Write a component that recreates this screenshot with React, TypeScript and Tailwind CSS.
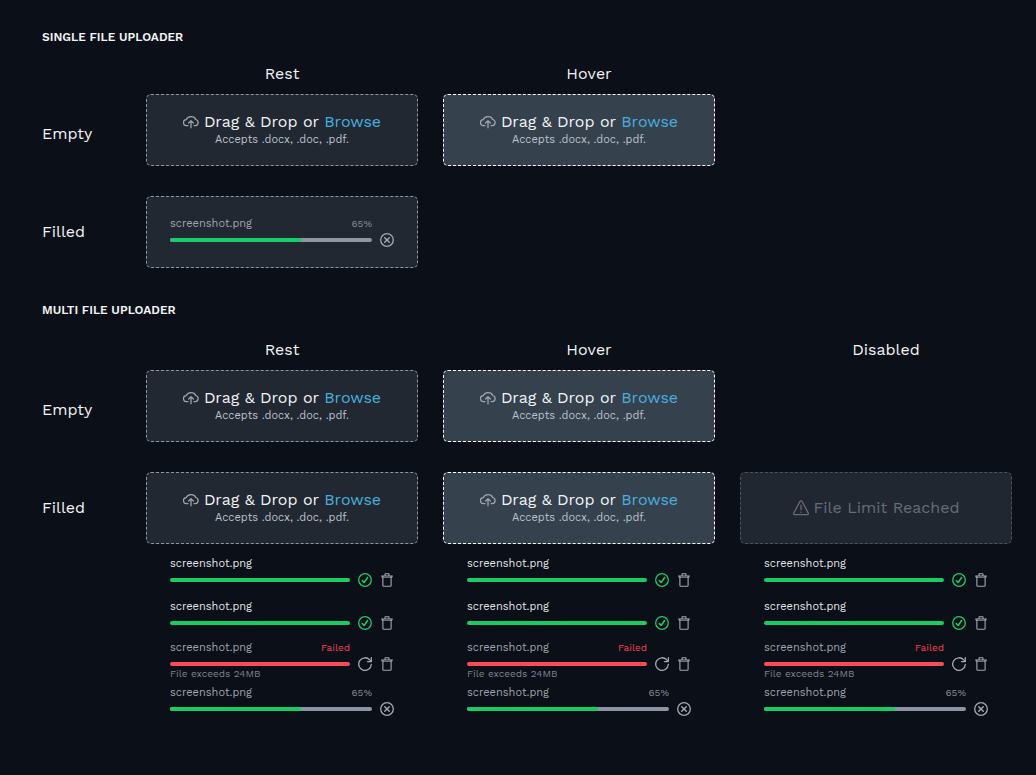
import React from "react";

type IconProps = { className?: string };

function Icon({ className, children }: IconProps & { children: React.ReactNode }) {
  return (
    <svg
      viewBox="0 0 16 16"
      fill="none"
      stroke="currentColor"
      strokeLinecap="round"
      strokeLinejoin="round"
      strokeWidth="1.25"
      aria-hidden="true"
      className={className}
    >
      {children}
    </svg>
  );
}

function CloudIcon() {
  return (
    <Icon className="size-4 shrink-0 text-[#a0a6b1]">
      <path d="M5 11.6H3.6A3 3 0 0 1 3.3 5.6 4.9 4.1 0 0 1 12.7 5.5 3.1 3.1 0 0 1 12.4 11.6H11" />
      <path d="M8 13.8V6.8M5.6 9 8 6.6l2.4 2.4" />
    </Icon>
  );
}

function WarningIcon() {
  return (
    <Icon className="size-4 shrink-0">
      <path d="M7 1.4a1.2 1.2 0 0 1 2 0l6.2 11.5a1.2 1.2 0 0 1-1.1 1.8H1.9a1.2 1.2 0 0 1-1.1-1.8Z" />
      <path d="M8 5.2v4.6M8 12v.3" />
    </Icon>
  );
}

function CheckIcon() {
  return (
    <Icon className="size-3.5 text-[#20c968]">
      <circle cx="8" cy="8" r="7.2" strokeWidth="1.5" />
      <path d="M4.9 8.6 7 10.8 11 5.2" strokeWidth="1.8" />
    </Icon>
  );
}

function CancelIcon() {
  return (
    <Icon className="size-3.5">
      <circle cx="8" cy="8" r="7.2" strokeWidth="1.5" />
      <path d="m5.4 5.4 5.2 5.2M10.6 5.4l-5.2 5.2" strokeWidth="1.6" />
    </Icon>
  );
}

function RetryIcon() {
  return (
    <Icon className="size-3.5">
      <path d="M15.2 8.6A7.2 7.2 0 1 1 13.4 3.3L15 5" strokeWidth="1.5" />
      <path d="M15.2.8V5.2H10.8" strokeWidth="1.5" />
    </Icon>
  );
}

function TrashIcon() {
  return (
    <Icon className="size-3.5">
      <path d="M2 3.4H14M5.8 3.2V.9H10.2V3.2M3.3 3.6V14.2a1 1 0 0 0 1 1H11.7a1 1 0 0 0 1-1V3.6" />
      <path d="M2.2 3.4V5H13.8V3.4" strokeWidth="0.8" />
    </Icon>
  );
}

function IconButton({ label, children }: { label: string; children: React.ReactNode }) {
  return (
    <button type="button" aria-label={label} className="flex h-4 items-center text-[#a3a8b3]">
      {children}
    </button>
  );
}

type UploadState = "done" | "failed" | "progress";

function FileUpload({ state }: { state: UploadState }) {
  const percent = state === "progress" ? 65 : 100;
  return (
    <div className={state === "failed" ? "-mt-0.5" : ""}>
      <div className="flex items-end gap-2">
        <div className="min-w-0 flex-1">
          <div className="flex items-baseline justify-between leading-4">
            <span className={state === "done" ? "text-[11px] leading-4 text-[#e3e6ea]" : "text-[11px] leading-4 text-[#a0a5af]"}>
              screenshot.png
            </span>
            {state === "failed" && <span className="text-[10px] leading-3 text-[#f24450]">Failed</span>}
            {state === "progress" && <span className="text-[10px] leading-3 text-[#838995]">65%</span>}
          </div>
          <div className="flex h-4 items-center">
            <div
              role="progressbar"
              aria-label="screenshot.png"
              aria-valuenow={percent}
              className="h-1 flex-1 overflow-hidden rounded-full bg-[#8e95a2]"
            >
              <div
                className={state === "failed" ? "h-full bg-[#ff4a57]" : "h-full bg-[#1bcb66]"}
                style={{ width: `${percent}%` }}
              />
            </div>
          </div>
        </div>
        {state === "done" && (
          <span className="flex h-4 items-center">
            <CheckIcon />
          </span>
        )}
        {state === "failed" && (
          <IconButton label="Retry upload">
            <RetryIcon />
          </IconButton>
        )}
        {state === "progress" ? (
          <IconButton label="Cancel upload">
            <CancelIcon />
          </IconButton>
        ) : (
          <IconButton label="Delete file">
            <TrashIcon />
          </IconButton>
        )}
      </div>
      {state === "failed" && <p className="-mt-1 text-[10px] leading-3 text-[#7d838e]">File exceeds 24MB</p>}
    </div>
  );
}

const boxClass = "flex h-[72px] flex-col justify-center rounded-[5px] border border-dashed";

function DropZone({ hover = false }: { hover?: boolean }) {
  return (
    <div
      className={`${boxClass} items-center ${
        hover ? "border-white bg-[#36414e]" : "border-[#8f96a2] bg-[#212832]"
      }`}
    >
      <div className="flex items-center gap-[5px] text-base leading-5 text-[#f1f3f5]">
        <CloudIcon />
        <p>
          Drag &amp; Drop or{" "}
          <button type="button" className="text-[#46afdc]">
            Browse
          </button>
        </p>
      </div>
      <p className="text-[11px] leading-4 text-[#bcc3cc]">Accepts .docx, .doc, .pdf.</p>
    </div>
  );
}

function DisabledZone() {
  return (
    <div className={`${boxClass} items-center border-[#4b525e] bg-[#212730] text-[#666c77]`}>
      <div className="flex items-center gap-[5px] text-base leading-5">
        <WarningIcon />
        <p>File Limit Reached</p>
      </div>
    </div>
  );
}

function FileList() {
  return (
    <div className="mt-3 grid auto-rows-[43px] px-6">
      <FileUpload state="done" />
      <FileUpload state="done" />
      <FileUpload state="failed" />
      <FileUpload state="progress" />
    </div>
  );
}

const gridClass = "grid grid-cols-[79px_repeat(3,minmax(0,1fr))] gap-x-[25px]";

function ColumnTitle({ children, shifted = false }: { children: React.ReactNode; shifted?: boolean }) {
  return <h3 className={shifted ? "pl-5 text-center" : "text-center"}>{children}</h3>;
}

function RowTitle({ children }: { children: React.ReactNode }) {
  return <h3 className="flex h-[72px] items-center">{children}</h3>;
}

export default function App() {
  return (
    <main className="min-h-screen bg-[#0b0f17] pt-7 pr-6 pb-10 pl-[42px] font-['Work_Sans',Inter,sans-serif] text-base text-[#f1f3f5]">
      <section>
        <h2 className="text-xs leading-[18px] font-semibold">SINGLE FILE UPLOADER</h2>
        <div className={`${gridClass} mt-4 leading-6`}>
          <span />
          <ColumnTitle>Rest</ColumnTitle>
          <ColumnTitle shifted>Hover</ColumnTitle>
        </div>
        <div className={`${gridClass} mt-2`}>
          <RowTitle>
            <span className="pt-2">Empty</span>
          </RowTitle>
          <DropZone />
          <DropZone hover />
        </div>
        <div className={`${gridClass} mt-[30px]`}>
          <RowTitle>Filled</RowTitle>
          <div className={`${boxClass} border-[#8f96a2] bg-[#212832] px-[23px]`}>
            <FileUpload state="progress" />
          </div>
        </div>
      </section>
      <section className="mt-[33px]">
        <h2 className="text-xs leading-[18px] font-semibold">MULTI FILE UPLOADER</h2>
        <div className={`${gridClass} mt-[19px] leading-6`}>
          <span />
          <ColumnTitle>Rest</ColumnTitle>
          <ColumnTitle shifted>Hover</ColumnTitle>
          <ColumnTitle shifted>Disabled</ColumnTitle>
        </div>
        <div className={`${gridClass} mt-2`}>
          <RowTitle>
            <span className="pt-2">Empty</span>
          </RowTitle>
          <DropZone />
          <DropZone hover />
        </div>
        <div className={`${gridClass} mt-[30px]`}>
          <RowTitle>Filled</RowTitle>
          <div>
            <DropZone />
            <FileList />
          </div>
          <div>
            <DropZone hover />
            <FileList />
          </div>
          <div>
            <DisabledZone />
            <FileList />
          </div>
        </div>
      </section>
    </main>
  );
}
